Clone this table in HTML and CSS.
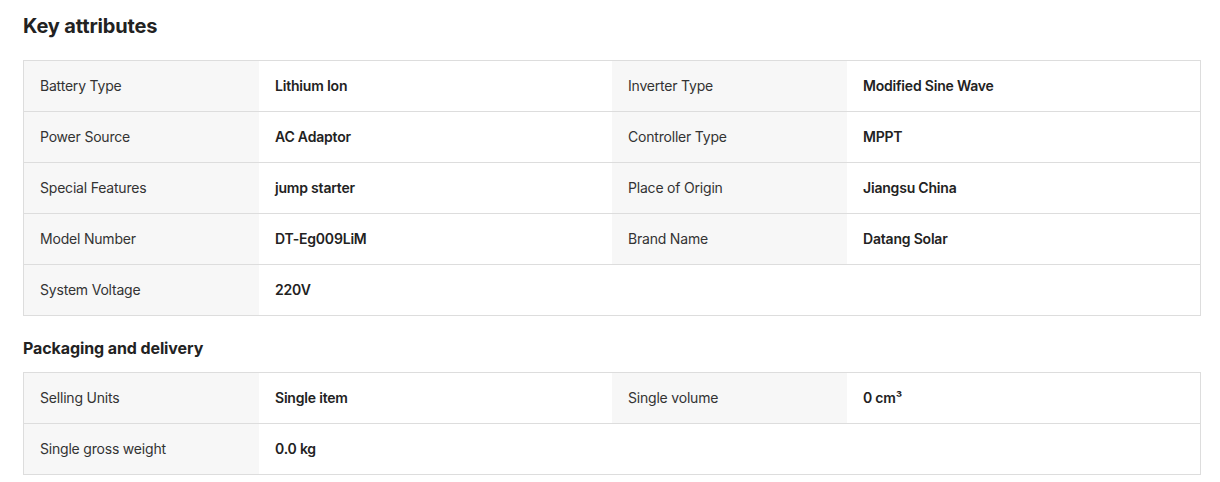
FILE: index.html
```html
<!DOCTYPE html>
<html lang="en">
<head>
    <meta charset="UTF-8">
    <meta name="viewport" content="width=device-width, initial-scale=1.0">
    <title>Key attributes</title>
    <link rel="stylesheet" href="styles.css">
</head>
<body>
    <div class="attributes">
        <h2 class="title">Key attributes</h2>
        <div class="attr-table">
            <div class="attr-row">
                <div class="attr-name">Battery Type</div>
                <div class="attr-value">Lithium Ion</div>
                <div class="attr-name">Inverter Type</div>
                <div class="attr-value">Modified Sine Wave</div>
            </div>
            <div class="attr-row">
                <div class="attr-name">Power Source</div>
                <div class="attr-value">AC Adaptor</div>
                <div class="attr-name">Controller Type</div>
                <div class="attr-value">MPPT</div>
            </div>
            <div class="attr-row">
                <div class="attr-name">Special Features</div>
                <div class="attr-value">jump starter</div>
                <div class="attr-name">Place of Origin</div>
                <div class="attr-value">Jiangsu China</div>
            </div>
            <div class="attr-row">
                <div class="attr-name">Model Number</div>
                <div class="attr-value">DT-Eg009LiM</div>
                <div class="attr-name">Brand Name</div>
                <div class="attr-value">Datang Solar</div>
            </div>
            <div class="attr-row">
                <div class="attr-name">System Voltage</div>
                <div class="attr-value">220V</div>
            </div>
        </div>

        <h3 class="subtitle">Packaging and delivery</h3>
        <div class="attr-table">
            <div class="attr-row">
                <div class="attr-name">Selling Units</div>
                <div class="attr-value">Single item</div>
                <div class="attr-name">Single volume</div>
                <div class="attr-value">0 cm³</div>
            </div>
            <div class="attr-row">
                <div class="attr-name">Single gross weight</div>
                <div class="attr-value">0.0 kg</div>
            </div>
        </div>
    </div>
</body>
</html>
```

FILE: styles.css
```css
* {
    margin: 0;
    padding: 0;
    box-sizing: border-box;
}

body, html {
    font-family: Inter, "Noto Sans", sans-serif;
    background: #fff;
    color: #222;
}

.attributes {
    width: 1178px;
    margin-left: 23px;
    padding-top: 12px;
}

.title {
    font-size: 20px;
    font-weight: 700;
    line-height: 28px;
    letter-spacing: -0.15px;
    color: #222;
    margin-bottom: 20px;
}

.subtitle {
    font-size: 16px;
    font-weight: 700;
    line-height: 22px;
    letter-spacing: -0.1px;
    color: #222;
    margin-top: 21px;
    margin-bottom: 13px;
}

.attr-table {
    border: 1px solid #ddd;
    border-bottom: none;
}

.attr-row {
    display: grid;
    grid-template-columns: 235px 353px 235px 353px; /* две пары имя/значение */
    height: 51px;
    border-bottom: 1px solid #ddd;
}

.attr-name,
.attr-value {
    display: flex;
    align-items: center;
    font-size: 14px;
    letter-spacing: -0.2px;
    padding-bottom: 2px;
}

.attr-name {
    background-color: #f7f7f7;
    color: #333;
    padding-left: 16px;
}

.attr-value {
    font-weight: 600;
    color: #222;
    padding-left: 16px;
}
```
